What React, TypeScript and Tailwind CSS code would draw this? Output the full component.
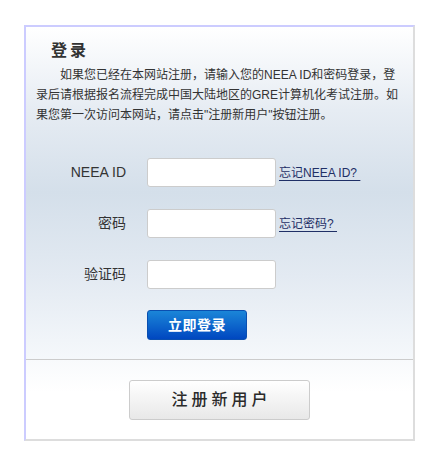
const FONT = "font-['Liberation_Sans','Noto_Sans_CJK_SC',sans-serif]"

const FIELDS = [
  { label: 'NEEA ID', type: 'text', link: '忘记NEEA ID?\u00a0' },
  { label: '密码', type: 'password', link: '忘记密码?\u00a0' },
  { label: '验证码', type: 'text', link: '' },
]

export default function App() {
  return (
    <div className={`min-h-screen bg-white pl-[24px] pt-[25px] ${FONT}`}>
      <div className="w-[391px] h-[416px] border-2 border-t-[#ccccff] border-l-[#ccccff] border-r-[#dddddd] border-b-[#dddddd] flex flex-col">
        {/* Login section */}
        <div className="h-[333px] border-b border-[#cccccc] bg-[linear-gradient(to_bottom,#ffffff_0%,#e6ecf3_25%,#d4dfea_50%,#e3eaf2_75%,#f5f8fb_100%)] pt-[14px] pl-[10px] pr-[13px]">
          <h2 className="pl-[15px] text-[16px] leading-[20px] font-bold tracking-[3px] text-[#333333]">登录</h2>
          <p className="mt-[4px] text-[12px] leading-[20px] text-[#333333] indent-[24px]">
            如果您已经在本网站注册，请输入您的NEEA ID和密码登录，登录后请根据报名流程完成中国大陆地区的GRE计算机化考试注册。如果您第一次访问本网站，请点击"注册新用户"按钮注册。
          </p>

          <div className="mt-[33px] flex flex-col gap-[22px]">
            {FIELDS.map((f) => (
              <div key={f.label} className="flex items-center">
                <label className="w-[90px] text-right text-[14px] text-[#333333]">{f.label}</label>
                <input
                  type={f.type}
                  className="ml-[21px] w-[129px] h-[29px] bg-white border border-[#cccccc] rounded-[3px] outline-none px-1 text-[13px]"
                />
                {f.link && (
                  <a href="#" className="ml-[3px] text-[12px] text-[#1f2f66] underline underline-offset-[3px]">
                    {f.link}
                  </a>
                )}
              </div>
            ))}
          </div>

          <button className="mt-[21px] ml-[111px] w-[100px] h-[30px] rounded-[3px] bg-[linear-gradient(to_bottom,#1b86d8,#0047c0)] border border-[#0a4fb0] text-white text-[14px] font-bold tracking-[0.5px]">
            立即登录
          </button>
        </div>

        {/* Register section */}
        <div className="flex-1 bg-[linear-gradient(to_bottom,#f8fafc,#ffffff_40%)] flex justify-center pt-[20px]">
          <button className="w-[181px] h-[40px] rounded-[3px] border border-[#cccccc] bg-[linear-gradient(to_bottom,#ffffff,#e8e8e8)] text-[16px] text-[#2a2a2a] font-medium tracking-[4px] pl-[4px]">
            注册新用户
          </button>
        </div>
      </div>
    </div>
  )
}
